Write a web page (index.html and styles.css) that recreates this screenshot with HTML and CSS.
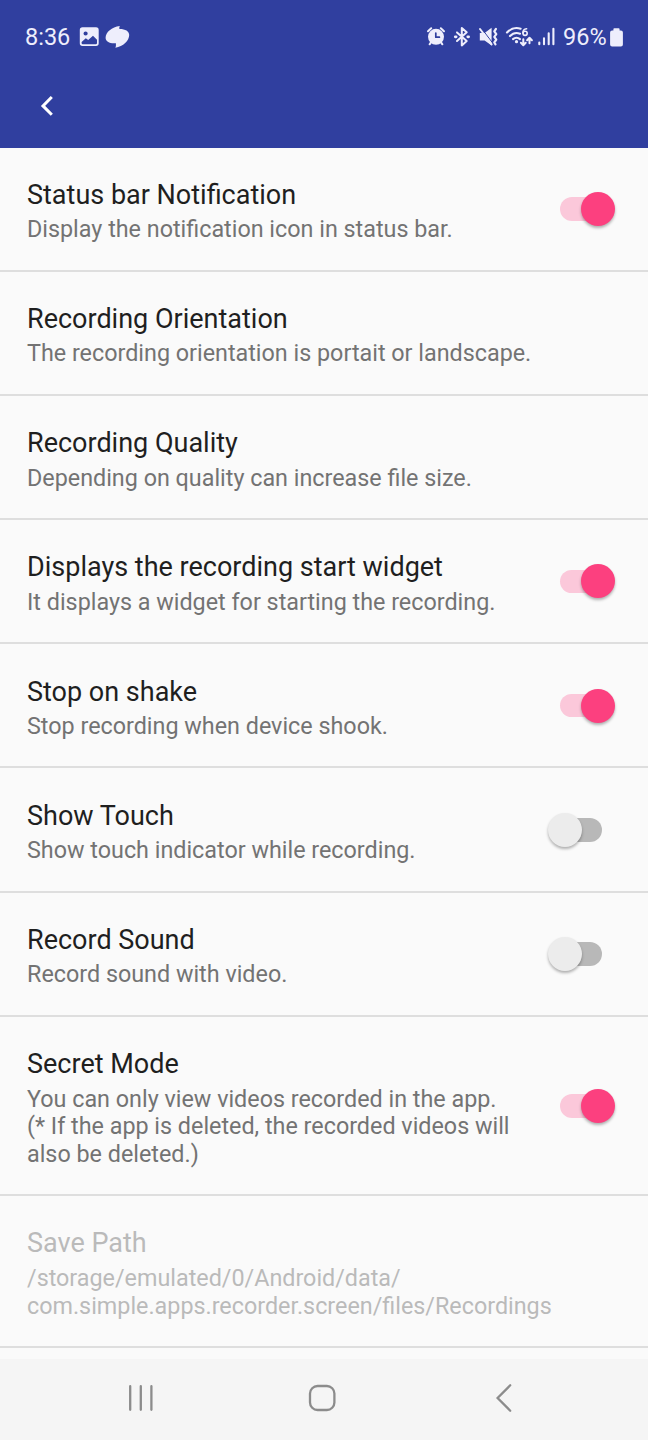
FILE: index.html
```html
<!doctype html>
<html lang="en">
    <head>
        <meta charset="utf-8">
        <title>Settings</title>
        <link rel="stylesheet" href="styles.css">
    </head>
    <body>
        <div class="screen">

            <div class="header">
                <div class="status_bar">
                    <span class="clock">8:36</span>
                    <svg class="status_left" width="52" height="24" viewBox="78 25 52 24">
                        <path fill="#eeeefc" fill-rule="evenodd" d="M82.5 27.3H96a2.7 2.7 0 0 1 2.7 2.7v13.3a2.7 2.7 0 0 1-2.7 2.7H82.5a2.7 2.7 0 0 1-2.7-2.7V30a2.7 2.7 0 0 1 2.7-2.7zM85.6 31.4a2.1 2.1 0 1 0 0 4.2a2.1 2.1 0 0 0 0-4.2zM81.6 42v1.1q0 1.2 1.2 1.2h13q1.2 0 1.2-1.2v-3.4l-4-4-4.8 4.3-2.4-1.8z"/>
                        <path fill="#eeeefc" d="M119.8 26q-.8 1.6-.4 3c5.8-.1 9.8 2.2 9.8 6 0 5.6-6 11.5-13.8 12.7q.8-1.7 .5-4.4c-6.2 .5-10.3-1.6-10.3-5.5 0-5.6 6.2-10.8 14.2-11.8z"/>
                    </svg>
                    <svg class="status_right" width="132" height="24" viewBox="426 25 132 24" fill="none" stroke="#eeeefc" stroke-width="2" stroke-linecap="round" stroke-linejoin="round">
                        <!-- alarm -->
                        <circle cx="436" cy="36.8" r="8" fill="#eeeefc" stroke="none"/>
                        <path stroke-width="2" d="M428 31.2l3.2-3M444 31.2l-3.2-3M430.8 42.7l-1.2 1.6M441.2 42.7l1.2 1.6"/>
                        <path stroke="#303f9f" stroke-width="1.7" d="M435.8 33v4.2h3.6"/>
                        <!-- bluetooth -->
                        <path d="M457 32.4l9.7 8.7-4.9 4.3V28l4.9 4.3-9.7 8.7"/>
                        <path stroke-width="2.8" d="M455.3 36.8h.8M467.8 36.8h.8"/>
                        <!-- sound off -->
                        <path fill="#eeeefc" stroke="none" d="M479.8 33h4.8l7-5.2v17.8l-7-5.2h-4.8z"/>
                        <path stroke="#303f9f" stroke-width="1" d="M481.4 28.2l11.7 15.4"/>
                        <path stroke-width="2" d="M480 29l11.6 15.4"/>
                        <path stroke-width="2.2" d="M495.9 29l-1.6 2.3 2 2.8-2 2.8 2 2.8-2 2.8 1.2 1.8"/>
                        <!-- wifi -->
                        <path stroke-width="2.1" d="M507 32.5c3.8-4 9-5.2 13.6-3.8M510 36.1c2.6-2.7 6.8-3.6 10-2.4M513 39.1c2-1.7 5-1.7 7 0"/>
                        <circle cx="516.5" cy="41.7" r="1.6" fill="#eeeefc" stroke="none"/>
                        <path stroke-width="1.6" d="M526.6 28.8c-2.2 .3-3.7 2-3.7 4.2"/>
                        <circle cx="525.1" cy="33.3" r="2.1" stroke-width="1.6"/>
                        <path stroke-width="2" d="M523.3 39.2v5.8M520.9 42.8l2.4 2.4 2.4-2.4M529.5 43.2v-5.2M527.1 40.2l2.4-2.4 2.4 2.4"/>
                        <!-- signal -->
                        <path stroke-width="2.1" d="M539.3 42.5v1.7M544 38.2v6M548.7 33.3v10.9M553.4 28.8v15.4"/>
                    </svg>
                    <span class="battery_text">96%</span>
                    <svg class="battery" width="13" height="19" viewBox="0 0 13 19">
                        <path fill="#eeeefc" d="M4.3 .3h4.4q.9 0 .9.9v1.3h1.3q2 0 2 2v12q0 2-2 2H2.1q-2 0-2-2v-12q0-2 2-2h1.3V1.2q0-.9.9-.9z"/>
                    </svg>
                </div>
                <div class="toolbar">
                    <svg width="14" height="22" viewBox="0 0 14 22">
                        <path fill="none" stroke="#fff" stroke-width="3" d="M11.8 2L3 10.9l8.8 8.9"/>
                    </svg>
                </div>
            </div>

            <div class="settings">
                <div class="item">
                    <div class="text">
                        <div class="title">Status bar Notification</div>
                        <div class="summary">Display the notification icon in status bar.</div>
                    </div>
                    <div class="switch on"><div class="thumb"></div></div>
                </div>
                <div class="item">
                    <div class="text">
                        <div class="title">Recording Orientation</div>
                        <div class="summary">The recording orientation is portait or landscape.</div>
                    </div>
                </div>
                <div class="item">
                    <div class="text">
                        <div class="title">Recording Quality</div>
                        <div class="summary">Depending on quality can increase file size.</div>
                    </div>
                </div>
                <div class="item">
                    <div class="text">
                        <div class="title">Displays the recording start widget</div>
                        <div class="summary">It displays a widget for starting the recording.</div>
                    </div>
                    <div class="switch on"><div class="thumb"></div></div>
                </div>
                <div class="item">
                    <div class="text">
                        <div class="title">Stop on shake</div>
                        <div class="summary">Stop recording when device shook.</div>
                    </div>
                    <div class="switch on"><div class="thumb"></div></div>
                </div>
                <div class="item">
                    <div class="text">
                        <div class="title">Show Touch</div>
                        <div class="summary">Show touch indicator while recording.</div>
                    </div>
                    <div class="switch"><div class="thumb"></div></div>
                </div>
                <div class="item">
                    <div class="text">
                        <div class="title">Record Sound</div>
                        <div class="summary">Record sound with video.</div>
                    </div>
                    <div class="switch"><div class="thumb"></div></div>
                </div>
                <div class="item">
                    <div class="text">
                        <div class="title">Secret Mode</div>
                        <div class="summary">You can only view videos recorded in the app.<br>(* If the app is deleted, the recorded videos will<br>also be deleted.)</div>
                    </div>
                    <div class="switch on"><div class="thumb"></div></div>
                </div>
                <div class="item disabled">
                    <div class="text">
                        <div class="title">Save Path</div>
                        <div class="summary">/storage/emulated/0/Android/data/<br>com.simple.apps.recorder.screen/files/Recordings</div>
                    </div>
                </div>
            </div>

            <div class="nav_bar">
                <svg width="26" height="28" viewBox="0 0 26 28">
                    <path d="M2.2 2.2v23.6M12.8 2.2v23.6M23.4 2.2v23.6"/>
                </svg>
                <svg class="home" width="28" height="28" viewBox="0 0 28 28">
                    <rect x="2" y="2" width="24.4" height="24" rx="7.5"/>
                </svg>
                <svg width="18" height="30" viewBox="0 0 18 30">
                    <path d="M15.2 2.3L2.6 15l12.6 12.7"/>
                </svg>
            </div>

        </div>
    </body>
</html>
```
FILE: styles.css
```css
body {
    margin: 0;
    background-color: #fafafa;
    font-family: Roboto, sans-serif;
}
svg {
    display: block;
    flex: none;
}
.screen {
    display: flex;
    flex-direction: column;
    height: 1440px;
    overflow: hidden;
}

/* header */
.header {
    height: 147.5px;
    flex: none;
    background-color: #303f9f;
}
.status_bar {
    display: flex;
    align-items: center;
    height: 74px;
    padding: 0 25px;
    color: #eeeefc;
    font-size: 23.5px;
    white-space: nowrap;
}
.clock {
    width: 53px;
}
.status_right {
    margin-left: auto;
}
.battery_text {
    width: 47px;
    margin-left: 5px;
}
.toolbar {
    padding: 21px 0 0 40px;
}

/* settings list */
.settings {
    flex: 1;
    min-height: 0;
    overflow: hidden;
}
.item {
    display: flex;
    align-items: center;
    padding: 31.3px 46px 25.8px 27px;
    border-bottom: 2px solid #dedede;
    white-space: nowrap;
}
.text {
    flex: 1;
    min-width: 0;
}
.title {
    margin-bottom: 4.5px;
    font-size: 27px;
    line-height: 33px;
    color: #1f1f1f;
}
.summary {
    font-size: 23.33px;
    line-height: 27.6px;
    color: #737373;
}
.disabled .title,
.disabled .summary {
    color: #bababa;
}
.switch {
    display: flex;
    align-items: center;
    flex: none;
    width: 42px;
    height: 23.5px;
    margin-bottom: 5px;
    border-radius: 12px;
    background-color: #b8b8b8;
}
.thumb {
    flex: none;
    width: 34px;
    height: 34px;
    margin-left: -12.5px;
    border-radius: 50%;
    background-color: #ececec;
    box-shadow: 0 2px 3px rgba(0, 0, 0, 0.3);
}
.switch.on {
    background-color: #fbc8da;
}
.switch.on .thumb {
    margin-left: 21px;
    background-color: #fc407f;
}

/* navigation */
.nav_bar {
    display: flex;
    align-items: center;
    justify-content: space-between;
    flex: none;
    height: 81px;
    padding: 0 135px 3px 128px;
    box-sizing: border-box;
    background-color: #f5f5f5;
}
.nav_bar svg {
    fill: none;
    stroke: #8c8c8c;
    stroke-width: 2.3;
    stroke-linecap: round;
}
.nav_bar .home {
    margin-right: 5px;
}
```
